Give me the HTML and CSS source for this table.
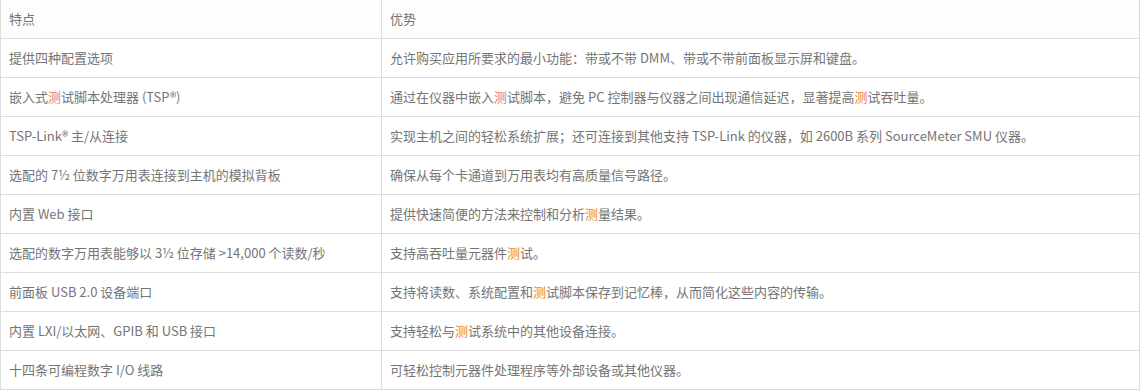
FILE: index.html
```html
<!DOCTYPE html>
<html lang="zh-CN">
<head>
    <meta charset="UTF-8">
    <title>特点与优势</title>
    <link rel="stylesheet" href="styles.css">
</head>
<body>
    <table class="spec-table">
        <thead>
            <tr><th class="col-feature">特点</th><th>优势</th></tr>
        </thead>
        <tbody>
            <tr><td>提供四种配置选项</td><td>允许购买应用所要求的最小功能：带或不带 DMM、带或不带前面板显示屏和键盘。</td></tr>
            <tr><td>嵌入式<span class="hl">测</span>试脚本处理器 (TSP®)</td><td>通过在仪器中嵌入<span class="hl">测</span>试脚本，避免 PC 控制器与仪器之间出现通信延迟，显著提高<span class="hl">测</span>试吞吐量。</td></tr>
            <tr><td>TSP-Link® 主/从连接</td><td>实现主机之间的轻松系统扩展；还可连接到其他支持 TSP-Link 的仪器，如 2600B 系列 SourceMeter SMU 仪器。</td></tr>
            <tr><td>选配的 7½ 位数字万用表连接到主机的模拟背板</td><td>确保从每个卡通道到万用表均有高质量信号路径。</td></tr>
            <tr><td>内置 Web 接口</td><td>提供快速简便的方法来控制和分析<span class="hl">测</span>量结果。</td></tr>
            <tr><td>选配的数字万用表能够以 3½ 位存储 &gt;14,000 个读数/秒</td><td>支持高吞吐量元器件<span class="hl">测</span>试。</td></tr>
            <tr><td>前面板 USB 2.0 设备端口</td><td>支持将读数、系统配置和<span class="hl">测</span>试脚本保存到记忆棒，从而简化这些内容的传输。</td></tr>
            <tr><td>内置 LXI/以太网、GPIB 和 USB 接口</td><td>支持轻松与<span class="hl">测</span>试系统中的其他设备连接。</td></tr>
            <tr><td>十四条可编程数字 I/O 线路</td><td>可轻松控制元器件处理程序等外部设备或其他仪器。</td></tr>
        </tbody>
    </table>
</body>
</html>
```

FILE: styles.css
```css
body {
    margin: 0;
    background: #fff;
    font-family: "Noto Sans CJK SC", "Noto Sans", sans-serif;
}
.spec-table {
    width: 1140px;
    border-collapse: collapse;
    font-size: 13px;
    color: #757575;
}
.spec-table th,
.spec-table td {
    height: 38px;
    padding: 0 8px;
    border: 1px solid #ddd;
    text-align: left;
    font-weight: normal;
    vertical-align: middle;
    line-height: 20px;
}
.spec-table thead th {
    background: #fdfdfd;
}
.spec-table thead tr th {
    border-top: none;
}
.col-feature {
    width: 364px;
}
.hl {
    color: #e8823a;
}
```
